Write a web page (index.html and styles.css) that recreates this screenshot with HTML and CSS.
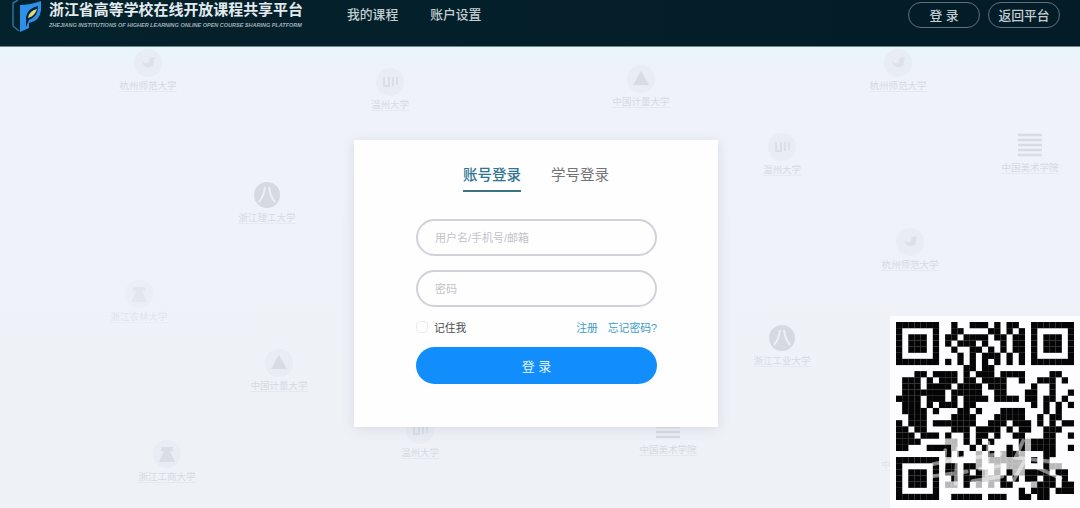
FILE: index.html
```
<!DOCTYPE html>
<html lang="zh-CN">
<head>
    <meta charset="UTF-8">
    <meta name="viewport" content="width=device-width, initial-scale=1.0">
    <title>浙江省高等学校在线开放课程共享平台</title>
    <link rel="stylesheet" href="styles.css">
</head>
<body>
    <header class="header">
        <svg class="logo" viewBox="0 0 32 34">
            <path d="M8 0 L3 3 V26 L9 31" fill="none" stroke="#2d6f9f" stroke-width="1.5"/>
            <path d="M10 5 Q20 5 31 1 V10 Q30 21 19 23 V28 L10 32 Z" fill="#2d91ea"/>
            <path d="M16 27 V17 Q18 8 28 6 Q28 17 19 20 Z" fill="#06243b"/>
            <path d="M18 18 Q19 11 27 9 Q25 16 18 18 Z" fill="#e4d976"/>
        </svg>
        <div class="brand">
            <div class="brand-name">浙江省高等学校在线开放课程共享平台</div>
            <div class="brand-en">ZHEJIANG INSTITUTIONS OF HIGHER LEARNING ONLINE OPEN COURSE SHARING PLATFORM</div>
        </div>
        <nav class="nav">
            <a>我的课程</a>
            <a>账户设置</a>
        </nav>
        <div class="header-buttons">
            <a class="pill">登 录</a>
            <a class="pill">返回平台</a>
        </div>
    </header>

    <main class="main">
        <div id="schools"></div>

        <form class="login">
            <div class="tabs">
                <a class="tab active">账号登录</a>
                <a class="tab">学号登录</a>
            </div>
            <input class="field" type="text" placeholder="用户名/手机号/邮箱">
            <input class="field" type="password" placeholder="密码">
            <div class="options">
                <label class="remember"><input type="checkbox">记住我</label>
                <div class="links"><a>注册</a><a>忘记密码?</a></div>
            </div>
            <button class="submit" type="button">登 录</button>
        </form>

        <div class="qr">
            <svg id="qrcode" viewBox="0 0 29 29"></svg>
            <svg class="brush" viewBox="0 0 170 80">
                <path d="M20 45 L52 38 M33 30 L30 62 M46 28 L44 66 M18 58 L56 53"/>
                <path d="M64 38 L92 34 M70 50 L90 47 M79 22 L77 66 M62 63 L94 58"/>
                <path d="M116 20 L108 38 L144 42 M122 34 L106 62 M125 46 L156 60"/>
            </svg>
        </div>
    </main>

    <script src="script.js"></script>
</body>
</html>
```
FILE: styles.css
```
* {
    box-sizing: border-box;
}
body {
    margin: 0;
    height: 508px;
    overflow: hidden;
    display: flex;
    flex-direction: column;
    font-family: 'Liberation Sans', 'Noto Sans CJK SC', sans-serif;
    background: #eef2f7;
    color: #555;
}
.header {
    height: 47px;
    flex: none;
    display: flex;
    align-items: flex-start;
    padding: 0 20px 0 10px;
    background: linear-gradient(to right, #04222b, #031c28);
    border-bottom: 1px solid #70868e;
    color: #c3ced3;
}
.logo {
    width: 32px;
    height: 34px;
    margin-right: 7px;
}
.brand {
    width: 256px;
    white-space: nowrap;
}
.brand-name {
    font-size: 14.95px;
    line-height: 20px;
    font-weight: bold;
    color: #e3eaee;
}
.brand-en {
    font-size: 5.5px;
    line-height: 10px;
    font-style: italic;
    font-weight: bold;
    color: #a0b0b8;
}
.nav {
    display: flex;
    gap: 32px;
    margin-left: 42px;
    font-size: 12.8px;
    font-weight: 500;
    line-height: 29px;
}
.header-buttons {
    display: flex;
    gap: 8px;
    margin: 2px 0 0 auto;
}
.pill {
    width: 72px;
    height: 26px;
    border: 1px solid #5d737c;
    border-radius: 13px;
    font-size: 12.8px;
    font-weight: 500;
    line-height: 25px;
    text-align: center;
}
.main {
    position: relative;
    flex: 1;
    background: linear-gradient(#e9f5f9, #eff2f8 34px, #eef2f7);
}

/* faint school marks scattered behind the form */
.school {
    position: absolute;
    width: 80px;
    margin-left: -40px;
    display: flex;
    flex-direction: column;
    align-items: center;
    color: #d0d5dc;
    white-space: nowrap;
    opacity: 0.8;
}
.school svg {
    width: 34px;
    height: 34px;
}
.school span {
    font-size: 9.5px;
    line-height: 11px;
    border-bottom: 1px solid #e4e8ee;
}
.school.light {
    opacity: 0.45;
}

.login {
    position: relative;
    width: 364px;
    height: 287px;
    margin: 93px 0 0 354px;
    padding: 24px 61px 0 62px;
    background: #fefeff;
    box-shadow: 0 2px 12px rgba(90, 100, 120, 0.15);
}
.tabs {
    display: flex;
    gap: 30px;
    margin: 0 0 27px 47px;
}
.tab {
    height: 28px;
    font-size: 14.5px;
    line-height: 23px;
    color: #737477;
    border-bottom: 2px solid transparent;
}
.tab.active {
    color: #2f7590;
    font-weight: 500;
    border-bottom-color: #3c7383;
}
.field {
    display: block;
    width: 241px;
    height: 37px;
    margin: 0 0 14px;
    padding: 0 17px;
    border: 2px solid #d4d0d8;
    border-radius: 19px;
    background: transparent;
    font: 11px 'Liberation Sans', 'Noto Sans CJK SC', sans-serif;
}
.field::placeholder {
    color: #c4c2c8;
}
.options {
    display: flex;
    justify-content: space-between;
    align-items: center;
    height: 12px;
    margin-bottom: 14px;
    font-size: 10.8px;
    color: #4c4c50;
}
.remember {
    display: flex;
    align-items: center;
}
.remember input {
    appearance: none;
    width: 12px;
    height: 12px;
    margin: 0 6px 0 0;
    border: 1px solid #eeebf0;
    border-radius: 4px;
}
.links {
    display: flex;
    gap: 10px;
    color: #3d9cc5;
}
.submit {
    display: block;
    width: 241px;
    height: 37px;
    padding: 0;
    border: none;
    border-radius: 19px;
    background: #128efc;
    color: #e4f3ff;
    font: 13px 'Liberation Sans', 'Noto Sans CJK SC', sans-serif;
}

.qr {
    position: absolute;
    right: 0;
    bottom: 0;
    width: 190px;
    height: 192px;
    padding: 6px;
    background: #fdfdff;
}
#qrcode {
    display: block;
    width: 178px;
    height: 178px;
}
.brush {
    position: absolute;
    left: 24px;
    top: 106px;
    width: 160px;
    height: 75px;
    fill: none;
    stroke: #fff;
    stroke-width: 4;
    stroke-linecap: round;
    opacity: 0.5;
}
```
FILE: script.js
```
// 1 = dark module, 2 = faded module, 0 = blank
const modules = [
    '11111110010011101011001111111',
    '10000010011000011010101000001',
    '10111010110111101101101011101',
    '10111010101110100101101011101',
    '10111010010011010101101011101',
    '10000010001010111010101000001',
    '11111110101010101010101111111',
    '00000000000110110000000000000',
    '00011011110101110111100001100',
    '01110101110110111100100111010',
    '01110111101111011100001001000',
    '01111111011111001100011001001',
    '11110111010111101111011011010',
    '01110101110110000000001010101',
    '01111010001101000111100010100',
    '00111000011110001111100101100',
    '10111011111110011101110101011',
    '11011000011101111010110011100',
    '11101110100101101001100011001',
    '11110000220101010000121111000',
    '11000111120010100010121111001',
    '00000000101002010211200011000',
    '11111110200002022222201010000',
    '10000010110112002022200012200',
    '10111010110101202012211110110',
    '10111010010111222101011011010',
    '10111010220102020110002111011',
    '10000010000000000000101110111',
    '11111110011111011100110110000'
];

const shades = { 1: '#050505', 2: '#b9b9b9' };
let cells = '';
modules.forEach((row, y) => {
    [...row].forEach((cell, x) => {
        if (cell !== '0') {
            cells += `<rect x="${x}" y="${y}" width="1.02" height="1.02" fill="${shades[cell]}"/>`;
        }
    });
});
document.getElementById('qrcode').innerHTML = cells;

const ring = '<circle cx="17" cy="17" r="14" fill="#e8ecf3"/>';
const marks = {
    bird: ring + '<path d="M11 14 Q12 24 22 20 L24 11 L18 12 Q20 18 13 17 Z" fill="#d9dee4"/>',
    book: ring + '<path d="M11 12 V21 H16 V12 M20 12 V21 M24 12 V20" fill="none" stroke="#d6dbe1" stroke-width="2"/>',
    peak: ring + '<path d="M17 9 L25 23 H9 Z" fill="#d2d7dd"/>',
    eight: '<circle cx="17" cy="17" r="13" fill="#d0d5db"/><path d="M15 9 Q14 18 9 24 M19 9 Q20 18 25 24" fill="none" stroke="#edf0f5" stroke-width="2"/>',
    gate: ring + '<path d="M11 10 H23 V14 H20 L25 25 H9 L14 14 H11 Z" fill="#d6dae0"/>',
    lines: '<path d="M5 7 H29 M5 12 H29 M5 17 H29 M5 22 H29 M5 27 H29" stroke="#d3d7dd" stroke-width="2.5"/>'
};

const schools = [
    { x: 148, y: -1, mark: 'bird', name: '杭州师范大学' },
    { x: 390, y: 18, mark: 'book', name: '温州大学' },
    { x: 641, y: 15, mark: 'peak', name: '中国计量大学' },
    { x: 898, y: -1, mark: 'bird', name: '杭州师范大学' },
    { x: 782, y: 83, mark: 'book', name: '温州大学' },
    { x: 1030, y: 81, mark: 'lines', name: '中国美术学院' },
    { x: 267, y: 131, mark: 'eight', name: '浙江理工大学' },
    { x: 910, y: 178, mark: 'bird', name: '杭州师范大学' },
    { x: 139, y: 230, mark: 'gate', name: '浙江农林大学', light: true },
    { x: 279, y: 299, mark: 'peak', name: '中国计量大学' },
    { x: 782, y: 274, mark: 'eight', name: '浙江工业大学' },
    { x: 167, y: 390, mark: 'gate', name: '浙江工商大学' },
    { x: 420, y: 366, mark: 'book', name: '温州大学' },
    { x: 668, y: 363, mark: 'lines', name: '中国美术学院' },
    { x: 910, y: 378, mark: 'peak', name: '中国计量大学', light: true }
];
document.getElementById('schools').innerHTML = schools.map(s => `
    <div class="school${s.light ? ' light' : ''}" style="left: ${s.x}px; top: ${s.y}px">
        <svg viewBox="0 0 34 34">${marks[s.mark]}</svg>
        <span>${s.name}</span>
    </div>`).join('');
```
